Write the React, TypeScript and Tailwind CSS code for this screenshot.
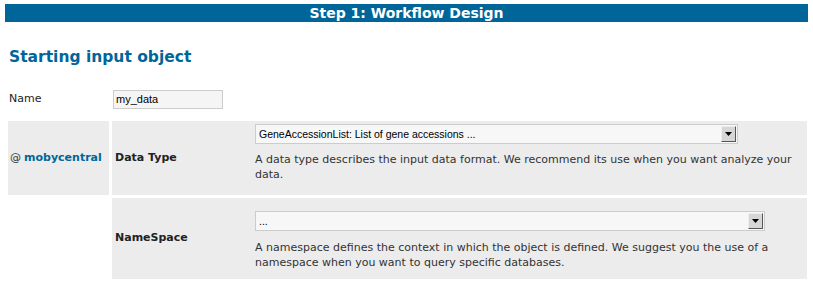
import React from "react";

function FakeSelect({ value, width }: { value: string; width: string }) {
  return (
    <div
      className={`${width} h-[20px] flex items-center justify-between bg-[#f7f7f7] border border-[#cccccc] pl-[3px] pr-[1px]`}
      style={{ fontFamily: '"Liberation Sans", Arial, sans-serif' }}
    >
      <span className="text-[10.5px] text-black leading-none">{value}</span>
      <span className="w-[15px] h-[16px] flex items-center justify-center bg-[#d6d6d6] border border-t-[#eeeeee] border-l-[#eeeeee] border-r-[#555555] border-b-[#555555]">
        <svg width="7" height="4" viewBox="0 0 7 4">
          <polygon points="0,0 7,0 3.5,4" fill="#000" />
        </svg>
      </span>
    </div>
  );
}

export default function App() {
  return (
    <div
      className="w-[813px] h-[291px] bg-white text-[#333333] overflow-hidden"
      style={{ fontFamily: '"DejaVu Sans", Verdana, sans-serif' }}
    >
      <div className="mx-[5px] mt-[4px] h-[18px] bg-[#006699] text-white font-bold text-[14px] leading-[18px] text-center">
        Step 1: Workflow Design
      </div>

      <h2 className="mt-[25px] ml-[9px] text-[#006699] font-bold text-[15.5px] leading-[20px]">
        Starting input object
      </h2>

      <div className="flex items-center mt-[23px] ml-[9px]">
        <span className="w-[104px] text-[11px] text-[#222222]">Name</span>
        <div
          className="w-[110px] h-[19px] bg-[#f5f5f5] border border-[#cccccc] text-[11px] text-black leading-[17px] pl-[2px]"
          style={{ fontFamily: '"Liberation Sans", Arial, sans-serif' }}
        >
          my_data
        </div>
      </div>

      <div className="grid grid-cols-[101px_695px] gap-[3px] ml-[8px] mt-[12px]">
        <div className="bg-[#ececec] h-[74px] flex items-center pl-[2px] text-[11px]">
          <span className="text-[#333333]">@</span>
          <span className="ml-[3px] font-bold text-[#006699]">mobycentral</span>
        </div>
        <div className="bg-[#ececec] h-[74px] flex">
          <div className="w-[143px] flex items-center pl-[3px] text-[11px] font-bold text-[#222222]">
            Data Type
          </div>
          <div className="flex-1 pt-[3px] pr-[6px]">
            <FakeSelect value="GeneAccessionList: List of gene accessions ..." width="w-[483px]" />
            <p className="mt-[8px] text-[11px] leading-[15px] text-[#333333]">
              A data type describes the input data format. We recommend its use when you want analyze your data.
            </p>
          </div>
        </div>

        <div className="h-[81px]" />
        <div className="bg-[#ececec] h-[81px] flex">
          <div className="w-[143px] flex items-center pl-[3px] text-[11px] font-bold text-[#222222]">
            NameSpace
          </div>
          <div className="flex-1 pt-[13px] pr-[6px]">
            <FakeSelect value="..." width="w-[510px]" />
            <p className="mt-[9px] text-[11px] leading-[15px] text-[#333333]">
              A namespace defines the context in which the object is defined. We suggest you the use of a namespace when you want to query specific databases.
            </p>
          </div>
        </div>
      </div>
    </div>
  );
}
